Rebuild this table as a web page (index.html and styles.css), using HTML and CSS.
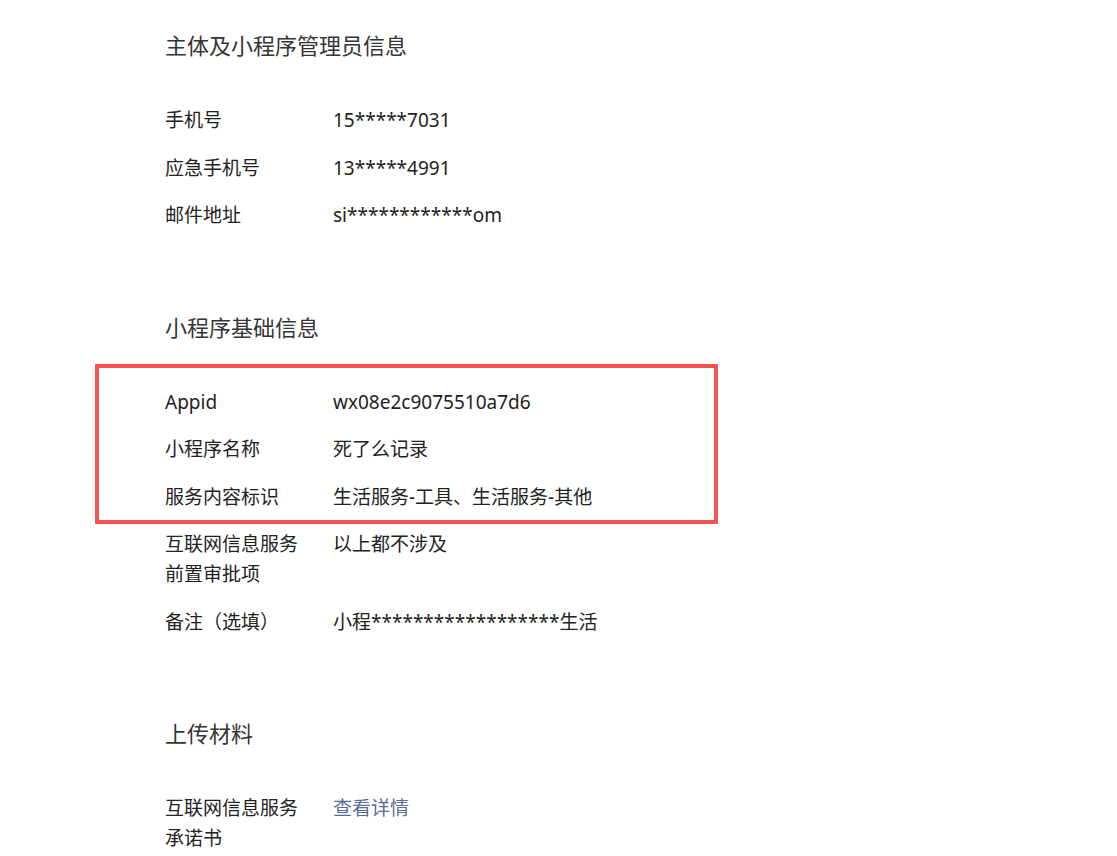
FILE: index.html
```html
<!DOCTYPE html>
<html lang="zh-CN">
<head>
<meta charset="utf-8">
<link rel="stylesheet" href="styles.css">
</head>
<body>
<div class="page">
  <section class="section">
    <h2 class="section-title">主体及小程序管理员信息</h2>
    <div class="rows">
      <div class="row"><div class="label">手机号</div><div class="value">15*****7031</div></div>
      <div class="row"><div class="label">应急手机号</div><div class="value">13*****4991</div></div>
      <div class="row"><div class="label">邮件地址</div><div class="value">si************om</div></div>
    </div>
  </section>
  <section class="section">
    <h2 class="section-title">小程序基础信息</h2>
    <div class="rows">
      <div class="highlight">
        <div class="row"><div class="label">Appid</div><div class="value">wx08e2c9075510a7d6</div></div>
        <div class="row"><div class="label">小程序名称</div><div class="value">死了么记录</div></div>
        <div class="row"><div class="label">服务内容标识</div><div class="value">生活服务-工具、生活服务-其他</div></div>
      </div>
      <div class="row"><div class="label">互联网信息服务<br>前置审批项</div><div class="value">以上都不涉及</div></div>
      <div class="row"><div class="label">备注（选填）</div><div class="value">小程******************生活</div></div>
    </div>
  </section>
  <section class="section">
    <h2 class="section-title">上传材料</h2>
    <div class="rows">
      <div class="row"><div class="label">互联网信息服务<br>承诺书</div><div class="value"><a class="link" href="#">查看详情</a></div></div>
    </div>
  </section>
</div>
</body>
</html>
```

FILE: styles.css
```css
html, body {
  margin: 0;
  padding: 0;
  background: #ffffff;
}

body {
  font-family: "Noto Sans", "Noto Sans CJK SC", sans-serif;
  color: #222222;
  font-size: 19px;
}

.page {
  padding: 30px 0 0 165px;
}

.section + .section {
  margin-top: 81.5px;
}

.section-title {
  margin: 0 0 45px 0;
  font-size: 22px;
  font-weight: 400;
  line-height: 30px;
  color: #353535;
}

.rows,
.highlight {
  display: flex;
  flex-direction: column;
  gap: 17.5px;
}

.highlight {
  position: relative;
}

.highlight::after {
  content: "";
  position: absolute;
  left: -70px;
  top: -23px;
  bottom: -12px;
  width: 623px;
  box-sizing: border-box;
  border: 4px solid #f55555;
  pointer-events: none;
}

.row {
  display: flex;
  line-height: 30px;
}

.label {
  width: 168px;
  flex: none;
}

.value {
  flex: none;
}

.link {
  color: #576b95;
  text-decoration: none;
}
```
